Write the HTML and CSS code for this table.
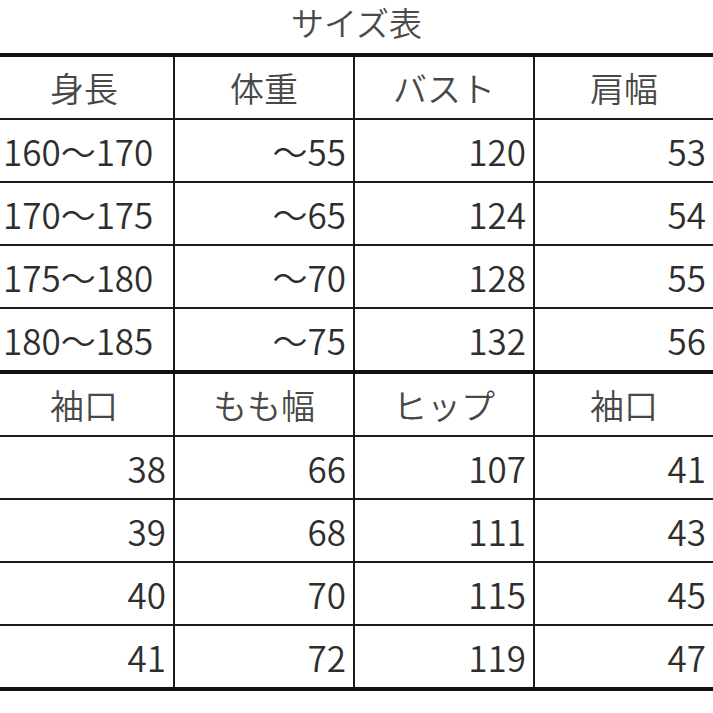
FILE: index.html
```html
<!DOCTYPE html>
<html lang="ja">
<head>
<meta charset="utf-8">
<title>サイズ表</title>
<link rel="stylesheet" href="styles.css">
</head>
<body>
<div class="title">サイズ表</div>
<table class="sheet">
  <tr class="head">
    <td>身長</td><td>体重</td><td>バスト</td><td>肩幅</td>
  </tr>
  <tr><td class="left">160〜170</td><td>〜55</td><td>120</td><td>53</td></tr>
  <tr><td class="left">170〜175</td><td>〜65</td><td>124</td><td>54</td></tr>
  <tr><td class="left">175〜180</td><td>〜70</td><td>128</td><td>55</td></tr>
  <tr><td class="left">180〜185</td><td>〜75</td><td>132</td><td>56</td></tr>
  <tr class="head sec">
    <td>袖口</td><td>もも幅</td><td>ヒップ</td><td>袖口</td>
  </tr>
  <tr><td>38</td><td>66</td><td>107</td><td>41</td></tr>
  <tr><td>39</td><td>68</td><td>111</td><td>43</td></tr>
  <tr><td>40</td><td>70</td><td>115</td><td>45</td></tr>
  <tr><td>41</td><td>72</td><td>119</td><td>47</td></tr>
</table>
</body>
</html>
```
FILE: styles.css
```css
html, body {
  margin: 0;
  padding: 0;
  background: #ffffff;
  overflow: hidden;
}
body {
  font-family: "Noto Sans CJK JP", "Noto Sans", sans-serif;
  font-weight: 350;
  color: #333333;
}
.title {
  height: 51px;
  padding-top: 2px;
  text-align: center;
  font-size: 33px;
  line-height: 40px;
  color: #4a4a4a;
}
.sheet {
  margin-left: -7px;
  border-collapse: collapse;
  table-layout: fixed;
  width: 722px;
  border-top: 4px solid #111111;
  border-bottom: 4px solid #111111;
}
.sheet td {
  border: 2px solid #1c1c1c;
  height: 61px;
  padding: 0 7px 0 7px;
  font-size: 35px;
  line-height: 1;
  text-align: right;
  vertical-align: middle;
  white-space: nowrap;
  color: #2e2e2e;
}
.sheet td.left {
  text-align: left;
  padding-left: 8px;
}
.sheet tr.head td {
  text-align: center;
  font-size: 34px;
  color: #484848;
}
.sheet tr.sec td {
  border-top: 4px solid #111111;
}
```
